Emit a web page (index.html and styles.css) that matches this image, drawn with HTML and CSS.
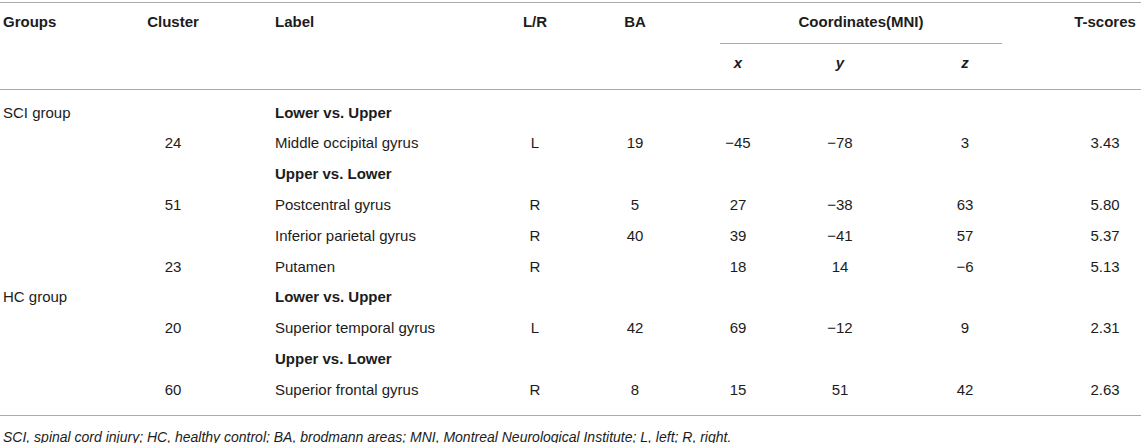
FILE: index.html
```html
<!DOCTYPE html>
<html lang="en">
<head>
<meta charset="utf-8">
<title>Table</title>
<link rel="stylesheet" href="styles.css">
</head>
<body>
<table class="results">
  <colgroup>
    <col class="w-group">
    <col class="w-cluster">
    <col class="w-label">
    <col class="w-side">
    <col class="w-ba">
    <col class="w-x">
    <col class="w-y">
    <col class="w-z">
    <col class="w-t">
  </colgroup>
  <thead>
    <tr class="head-top">
      <th rowspan="2" class="c-group">Groups</th>
      <th rowspan="2" class="c-center">Cluster</th>
      <th rowspan="2" class="c-label">Label</th>
      <th rowspan="2" class="c-center">L/R</th>
      <th rowspan="2" class="c-center">BA</th>
      <th colspan="3" class="coord-head"><div class="coord-title">Coordinates(MNI)</div></th>
      <th rowspan="2" class="c-t">T-scores</th>
    </tr>
    <tr class="head-axes">
      <th class="axis">x</th>
      <th class="axis">y</th>
      <th class="axis">z</th>
    </tr>
  </thead>
  <tbody>
    <tr><td class="c-group">SCI group</td><td class="c-center"></td><td class="c-label"><b>Lower vs. Upper</b></td><td class="c-center"></td><td class="c-center"></td><td class="c-center"></td><td class="c-center"></td><td class="c-center"></td><td class="c-t"></td></tr>
    <tr><td class="c-group"></td><td class="c-center">24</td><td class="c-label">Middle occipital gyrus</td><td class="c-center">L</td><td class="c-center">19</td><td class="c-center">−45</td><td class="c-center">−78</td><td class="c-center">3</td><td class="c-t">3.43</td></tr>
    <tr><td class="c-group"></td><td class="c-center"></td><td class="c-label"><b>Upper vs. Lower</b></td><td class="c-center"></td><td class="c-center"></td><td class="c-center"></td><td class="c-center"></td><td class="c-center"></td><td class="c-t"></td></tr>
    <tr><td class="c-group"></td><td class="c-center">51</td><td class="c-label">Postcentral gyrus</td><td class="c-center">R</td><td class="c-center">5</td><td class="c-center">27</td><td class="c-center">−38</td><td class="c-center">63</td><td class="c-t">5.80</td></tr>
    <tr><td class="c-group"></td><td class="c-center"></td><td class="c-label">Inferior parietal gyrus</td><td class="c-center">R</td><td class="c-center">40</td><td class="c-center">39</td><td class="c-center">−41</td><td class="c-center">57</td><td class="c-t">5.37</td></tr>
    <tr><td class="c-group"></td><td class="c-center">23</td><td class="c-label">Putamen</td><td class="c-center">R</td><td class="c-center"></td><td class="c-center">18</td><td class="c-center">14</td><td class="c-center">−6</td><td class="c-t">5.13</td></tr>
    <tr><td class="c-group">HC group</td><td class="c-center"></td><td class="c-label"><b>Lower vs. Upper</b></td><td class="c-center"></td><td class="c-center"></td><td class="c-center"></td><td class="c-center"></td><td class="c-center"></td><td class="c-t"></td></tr>
    <tr><td class="c-group"></td><td class="c-center">20</td><td class="c-label">Superior temporal gyrus</td><td class="c-center">L</td><td class="c-center">42</td><td class="c-center">69</td><td class="c-center">−12</td><td class="c-center">9</td><td class="c-t">2.31</td></tr>
    <tr><td class="c-group"></td><td class="c-center"></td><td class="c-label"><b>Upper vs. Lower</b></td><td class="c-center"></td><td class="c-center"></td><td class="c-center"></td><td class="c-center"></td><td class="c-center"></td><td class="c-t"></td></tr>
    <tr><td class="c-group"></td><td class="c-center">60</td><td class="c-label">Superior frontal gyrus</td><td class="c-center">R</td><td class="c-center">8</td><td class="c-center">15</td><td class="c-center">51</td><td class="c-center">42</td><td class="c-t">2.63</td></tr>
  </tbody>
</table>
<p class="note">SCI, spinal cord injury; HC, healthy control; BA, brodmann areas; MNI, Montreal Neurological Institute; L, left; R, right.</p>
</body>
</html>
```

FILE: styles.css
```css
html, body {
  margin: 0;
  padding: 0;
  background: #ffffff;
}

body {
  font-family: "Liberation Sans", Arial, sans-serif;
  font-size: 15px;
  color: #1c1c1c;
}

.results {
  width: 1141px;
  margin-top: 2px;
  border-collapse: collapse;
  table-layout: fixed;
}

.w-group { width: 120px; }
.w-cluster { width: 106px; }
.w-label { width: 250px; }
.w-side { width: 118px; }
.w-ba { width: 82px; }
.w-x { width: 124px; }
.w-y { width: 80px; }
.w-z { width: 170px; }
.w-t { width: 91px; }

.results th,
.results td {
  padding: 0;
  white-space: nowrap;
  font-weight: normal;
}

.results thead th {
  font-weight: bold;
  line-height: 20px;
  vertical-align: top;
}

.results thead tr.head-top th {
  border-top: 1px solid #ababab;
  padding-top: 9px;
}

.results thead tr.head-top th.coord-head {
  padding-top: 0;
}

.coord-title {
  margin: 0 48px 0 44px;
  padding: 9px 0 11px;
  text-align: center;
  border-bottom: 1px solid #ababab;
}

.results thead tr.head-axes th {
  padding: 9px 0 16px;
  font-style: italic;
  text-align: center;
}

.results thead tr.head-axes th,
.results thead th[rowspan] {
  border-bottom: 1px solid #ababab;
}

.results tbody td {
  line-height: 20.8px;
  padding-top: 5px;
  padding-bottom: 5px;
  vertical-align: middle;
}

.results tbody tr:first-child td {
  padding-top: 12.6px;
}

.results tbody tr:last-child td {
  padding-bottom: 14.6px;
  border-bottom: 1px solid #ababab;
}

.c-group {
  text-align: left;
  padding-left: 3px !important;
}

.c-center {
  text-align: center;
}

.c-label {
  text-align: left;
  padding-left: 49px !important;
}

.c-t {
  text-align: center;
  padding-left: 19px !important;
}

.note {
  margin: 11px 0 0 3px;
  font-size: 14px;
  line-height: 20px;
  font-style: italic;
}
```
